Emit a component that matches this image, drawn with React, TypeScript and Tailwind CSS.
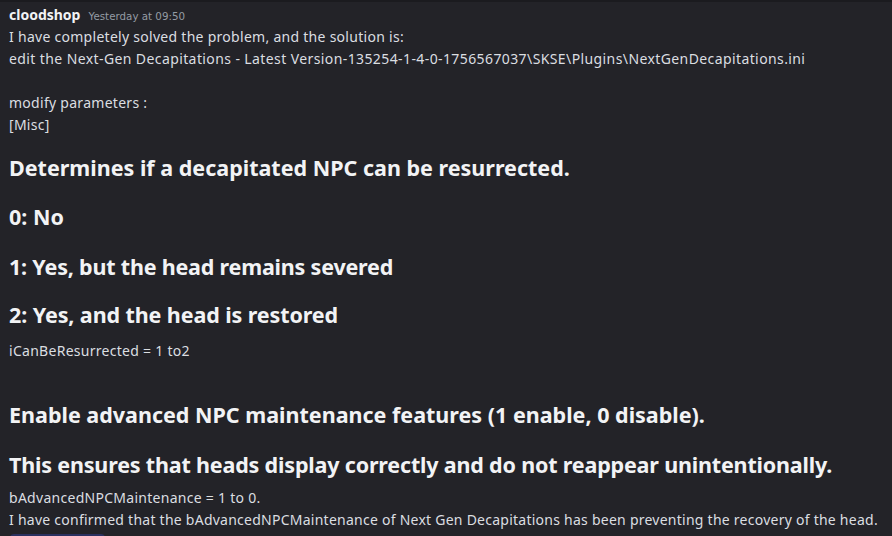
import React from 'react';

const Heading: React.FC<{ children: React.ReactNode; className?: string }> = ({ children, className = '' }) => (
  <h2 className={`text-[21.5px] leading-[28px] font-bold text-[#f2f3f5] whitespace-nowrap ${className}`}>{children}</h2>
);

const Line: React.FC<{ children?: React.ReactNode; className?: string }> = ({ children, className = 'tracking-[0.28px]' }) => (
  <div className={`text-[14px] leading-[22px] text-[#dbdee1] whitespace-nowrap h-[22px] ${className}`}>{children}</div>
);

export default function App() {
  return (
    <div className="w-[892px] h-[536px] overflow-hidden bg-[#232328] font-['Noto_Sans',sans-serif]">
      <div className="h-[2px] bg-[#1b1b1f]" />
      <div className="pl-[9px] pt-[2px]">
        <div className="flex items-baseline gap-[8px] h-[22px]">
          <span className="text-[14px] leading-[22px] font-bold text-[#f2f3f5]">cloodshop</span>
          <span className="text-[10.3px] text-[#949ba4] font-['DejaVu_Sans',sans-serif]">Yesterday at 09:50</span>
        </div>
        <Line>I have completely solved the problem, and the solution is:</Line>
        <Line className="tracking-[0.4px]">edit the Next-Gen Decapitations - Latest Version-135254-1-4-0-1756567037\SKSE\Plugins\NextGenDecapitations.ini</Line>
        <Line />
        <Line>modify parameters :</Line>
        <Line>[Misc]</Line>

        <Heading className="mt-[18px]">Determines if a decapitated NPC can be resurrected.</Heading>
        <Heading className="mt-[21px]">0: No</Heading>
        <Heading className="mt-[22px] tracking-[-0.2px]">1: Yes, but the head remains severed</Heading>
        <Heading className="mt-[20px] tracking-[-0.1px]">2: Yes, and the head is restored</Heading>
        <div className="mt-[11px]">
          <Line>iCanBeResurrected = 1 to2</Line>
          <Line />
        </div>

        <Heading className="mt-[17px]">Enable advanced NPC maintenance features (1 enable, 0 disable).</Heading>
        <Heading className="mt-[22px] tracking-[-0.18px]">This ensures that heads display correctly and do not reappear unintentionally.</Heading>
        <div className="mt-[8px]">
          <Line>bAdvancedNPCMaintenance = 1 to 0.</Line>
          <Line className="tracking-[0.25px]">I have confirmed that the bAdvancedNPCMaintenance of Next Gen Decapitations has been preventing the recovery of the head.</Line>
        </div>
        <div className="mt-[3px] ml-[1px] w-[95px] h-[8px] rounded-[4px] bg-[#2a3160]" />
      </div>
    </div>
  );
}
